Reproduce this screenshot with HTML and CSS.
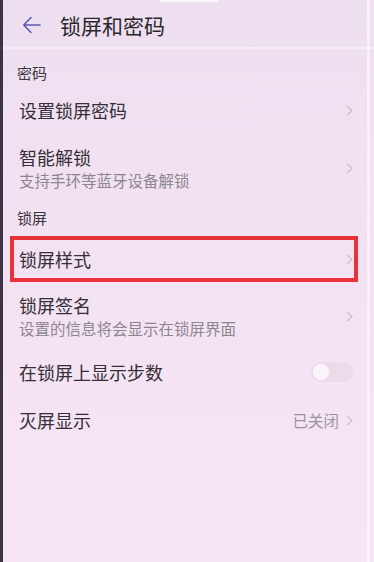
FILE: index.html
```html
<!DOCTYPE html>
<html lang="zh-CN">
<head>
<meta charset="utf-8">
<link rel="stylesheet" href="styles.css">
</head>
<body>
<div class="screen">
  <div class="topbar"><span class="status-line"></span></div>
  <header class="header">
    <svg class="back" width="20" height="18" viewBox="0 0 20 18"><path d="M18 9H2M9 1.5L1.8 9L9 16.5" fill="none" stroke="#5b5aae" stroke-width="1.6" stroke-linecap="round" stroke-linejoin="round"/></svg>
    <h1 class="title">锁屏和密码</h1>
  </header>
  <div class="section first">密码</div>
  <div class="row">
    <div class="texts"><div class="label">设置锁屏密码</div></div>
    <svg class="chev" width="7" height="11" viewBox="0 0 7 11"><path d="M1 1l5 4.5L1 10" fill="none" stroke="#cbbfcb" stroke-width="1.3"/></svg>
  </div>
  <div class="row double">
    <div class="texts"><div class="label">智能解锁</div><div class="sub">支持手环等蓝牙设备解锁</div></div>
    <svg class="chev" width="7" height="11" viewBox="0 0 7 11"><path d="M1 1l5 4.5L1 10" fill="none" stroke="#cbbfcb" stroke-width="1.3"/></svg>
  </div>
  <div class="section second">锁屏</div>
  <div class="row marked">
    <div class="texts"><div class="label">锁屏样式</div></div>
    <svg class="chev" width="7" height="11" viewBox="0 0 7 11"><path d="M1 1l5 4.5L1 10" fill="none" stroke="#cbbfcb" stroke-width="1.3"/></svg>
  </div>
  <div class="row double sig">
    <div class="texts"><div class="label">锁屏签名</div><div class="sub">设置的信息将会显示在锁屏界面</div></div>
    <svg class="chev" width="7" height="11" viewBox="0 0 7 11"><path d="M1 1l5 4.5L1 10" fill="none" stroke="#cbbfcb" stroke-width="1.3"/></svg>
  </div>
  <div class="row">
    <div class="texts"><div class="label">在锁屏上显示步数</div></div>
    <div class="toggle"><span class="knob"></span></div>
  </div>
  <div class="row">
    <div class="texts"><div class="label">灭屏显示</div></div>
    <span class="value">已关闭</span>
    <svg class="chev" width="7" height="11" viewBox="0 0 7 11"><path d="M1 1l5 4.5L1 10" fill="none" stroke="#cbbfcb" stroke-width="1.3"/></svg>
  </div>
</div>
</body>
</html>
```
FILE: styles.css
```css
html, body {
  margin: 0;
  padding: 0;
}
body {
  width: 374px;
  height: 562px;
  overflow: hidden;
  font-family: "Noto Sans CJK SC", "Noto Sans", sans-serif;
  background:
    linear-gradient(to right, transparent 367px, rgba(255,255,255,0.55) 367px, rgba(255,255,255,0.55) 370px, transparent 370px),
    linear-gradient(to bottom, #eedff0 0%, #f3e2f2 50%, #f7e5f6 100%);
}
.screen {
  height: 562px;
  border-left: 3px solid #3b3446;
  box-sizing: border-box;
  display: flex;
  flex-direction: column;
}
.topbar {
  height: 0;
  position: relative;
}
.status-line {
  position: absolute;
  left: 157px;
  top: 0;
  width: 58px;
  height: 2px;
  background: #fbf6fb;
}
.header {
  height: 47px;
  display: flex;
  align-items: center;
  padding-left: 19px;
  border-bottom: 2px solid #f6ecf7;
  gap: 18px;
}
.back {
  display: block;
  margin-top: 2px;
}
.title {
  margin: 0;
  font-size: 21px;
  font-weight: 400;
  color: #2a282c;
  line-height: 28px;
  margin-top: 2px;
}
.section {
  font-size: 15px;
  line-height: 20px;
  color: #3a363c;
  padding-left: 14px;
}
.section.first {
  height: 37px;
  padding-top: 14px;
  box-sizing: border-box;
}
.section.second {
  height: 34px;
  padding-top: 6px;
  box-sizing: border-box;
}
.row {
  height: 48px;
  display: flex;
  align-items: center;
  padding-left: 16px;
  padding-right: 21px;
  box-sizing: border-box;
}
.row.double {
  height: 68px;
}
.row.marked {
  height: 46px;
  position: relative;
}
.row.marked::after {
  content: "";
  position: absolute;
  left: 7px;
  right: 16px;
  top: 0;
  bottom: 0;
  border: 4px solid #e7323a;
}
.row.sig {
  height: 66px;
  padding-top: 2px;
}
.texts {
  flex: 1;
}
.label {
  font-size: 18px;
  line-height: 24px;
  color: #332f35;
}
.sub {
  font-size: 15.5px;
  line-height: 22px;
  color: #8c868e;
}
.chev {
  display: block;
  flex: none;
}
.value {
  font-size: 15.5px;
  color: #9c959d;
  margin-right: 7px;
}
.toggle {
  width: 42px;
  height: 20px;
  border-radius: 10px;
  background: #eddbea;
  display: flex;
  align-items: center;
  padding-left: 2px;
  box-sizing: border-box;
}
.knob {
  width: 16px;
  height: 16px;
  border-radius: 50%;
  background: #fbf5fb;
}
```
